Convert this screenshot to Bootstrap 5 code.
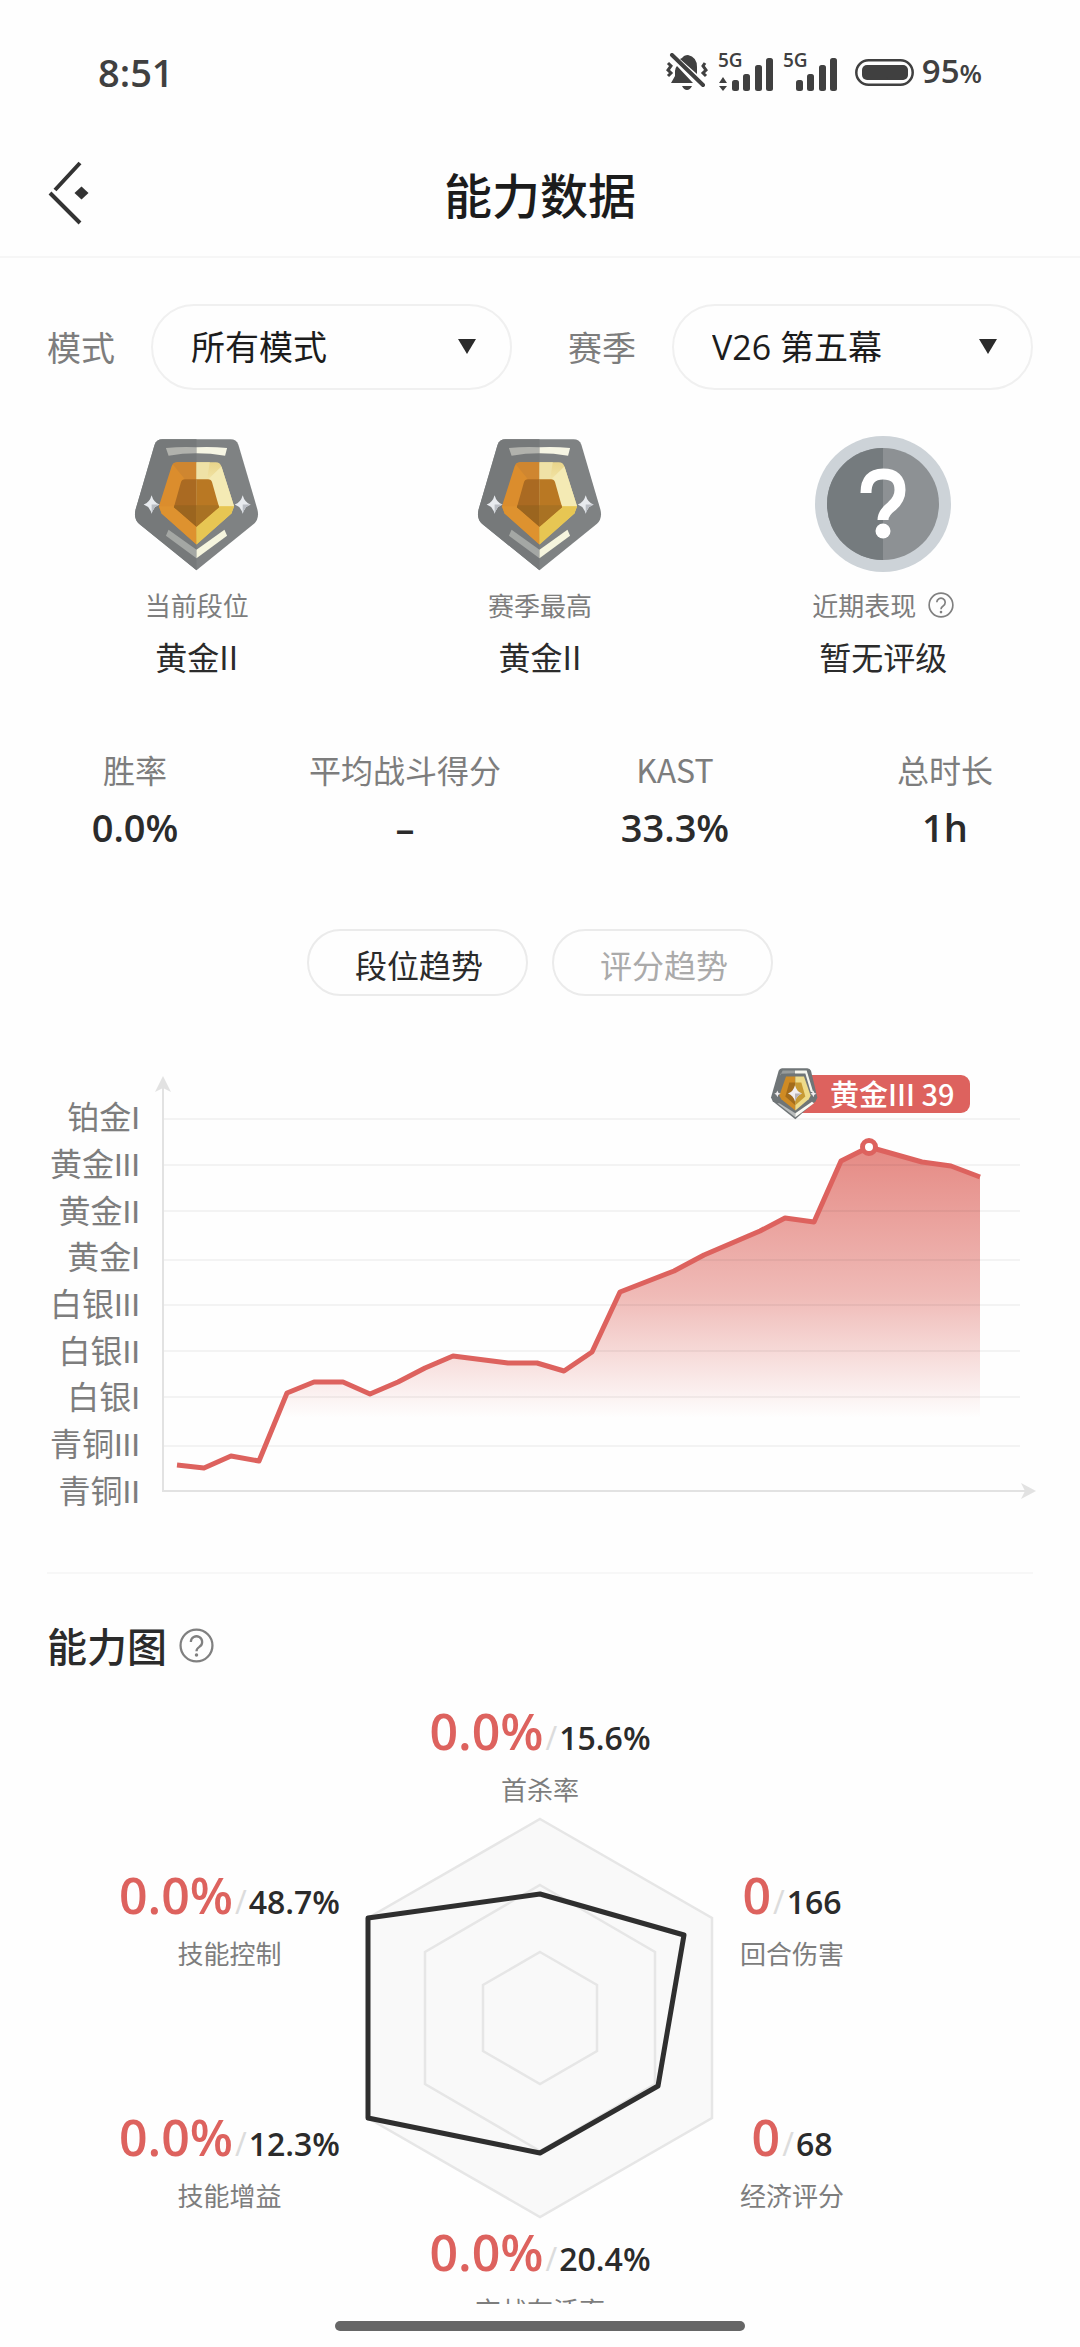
<!DOCTYPE html>
<html lang="zh-CN">
<head>
<meta charset="utf-8">
<meta name="viewport" content="width=device-width, initial-scale=1">
<title>能力数据</title>
<link href="https://cdn.jsdelivr.net/npm/bootstrap@5.3.0/dist/css/bootstrap.min.css" rel="stylesheet">
<script src="https://cdn.jsdelivr.net/npm/bootstrap@5.3.0/dist/js/bootstrap.bundle.min.js" defer></script>
<style>
  :root { --ink:#2b2b2b; --soft:#7d7d7d; --brand:#dd625e; }
  body { font-family:"Noto Sans CJK SC",sans-serif; color:var(--ink); background:#fefefe; font-size:32px; line-height:48px; }
  svg { display:block; flex:none; }
  .num { font-family:"Open Sans","Noto Sans",sans-serif; font-weight:600; }
  .soft { color:var(--soft); }
  .status-bar { height:144px; padding:0 98px; color:#404040; }
  .status-bar .clock { font-size:38px; }
  .status-bar .level { font-size:33px; }
  .status-bar .level span { font-size:26px; }
  .title-bar { height:114px; padding:0 47px 14px; border-bottom:2px solid #f6f6f6; }
  .title-bar h1 { font-size:48px; line-height:72px; font-weight:500; color:#1c1c1c; }
  .side-slot { width:48px; }
  .filters { padding:46px 47px 0; gap:56px; font-size:34px; }
  .filters .filter { flex:1 1 0; }
  .filters label { color:var(--soft); margin-right:36px; white-space:nowrap; }
  .picker { position:relative; flex:1; }
  .picker .form-select { height:86px; border:2px solid #f0f0f0; border-radius:43px; padding:0 60px 0 38px; font-size:34px; font-family:"Open Sans","Noto Sans CJK SC",sans-serif; color:#1c1c1c; background:none; appearance:none; }
  .picker::after { content:""; position:absolute; right:36px; top:35px; width:18px; height:15px; background:var(--ink); clip-path:polygon(0 0,100% 0,50% 100%); pointer-events:none; }
  .ranks { padding:45px 25px 0; }
  .emblem { height:138px; display:flex; align-items:center; justify-content:center; }
  .caption { font-size:26px; line-height:40px; color:var(--soft); }
  .ranks .caption { margin-top:12px; }
  .ranks .grade { margin-top:7px; }
  .bare { border:0; background:none; padding:0; color:#808080; }
  .help-gap { margin-left:12px; }
  .stats { padding-top:65px; }
  .stats .num { font-size:38px; line-height:52px; margin-top:8px; }
  .tabs { padding-top:76px; gap:24px; }
  .tabs .btn { width:221px; height:67px; padding:2px 0 0 3px; border:2px solid #ebebeb; border-radius:34px; font-size:32px; line-height:48px; color:#aaa; background:none; }
  .tabs .btn.active { color:var(--ink); border-color:#ebebeb; background:none; }
  .trend { padding:64px 40px 0 0; }
  .scale-list { width:150px; height:455px; padding:35px 10px 0 0; display:grid; grid-template-rows:repeat(9,1fr); align-items:center; text-align:right; color:var(--soft); font-family:Roboto,"Noto Sans CJK SC",sans-serif; line-height:46px; }
  .plot { position:relative; flex:1; }
  .plot svg.lines { width:100%; height:auto; }
  .peak { position:absolute; left:620px; top:7px; display:flex; align-items:center; color:#fff; font-size:29px; font-weight:500; }
  .peak span { height:38px; line-height:37px; margin-left:-24px; padding:0 16px 0 36px; border-radius:0 9px 9px 0; background:var(--brand); white-space:nowrap; }
  .peak svg { z-index:1; }
  .ability { margin:57px 47px 0; padding-top:46px; border-top:2px solid #f7f7f7; }
  .ability h2 { font-size:40px; line-height:50px; font-weight:500; }
  .ability .first-metric { margin-top:27px; }
  .radar { display:grid; grid-template-columns:1fr 346px 1fr; column-gap:27px; margin:8px 0 0; }
  .radar .flank { padding-top:44px; display:flex; flex-direction:column; gap:130px; }
  .metric { text-align:center; white-space:nowrap; }
  .metric .pair { line-height:68px; height:68px; font-size:32px; }
  .metric .pair b { font-size:50px; font-weight:600; color:var(--brand); }
  .metric .pair i { font-style:normal; font-weight:400; color:#dcdcdc; margin:0 2px; }
  .metric .caption { height:40px; margin-top:4px; }
  .home-area { height:43px; flex:none; }
  .home-area div { width:410px; height:10px; border-radius:5px; background:#666; margin-top:17px; }
</style>
</head>
<body class="d-flex flex-column vh-100 overflow-hidden">

<svg width="0" height="0" class="position-absolute" aria-hidden="true">
  <defs>
    <linearGradient id="gemRight" x1="0" y1="0" x2="0" y2="1"><stop offset="0" stop-color="#e9d58a"/><stop offset=".3" stop-color="#f5e9b0"/><stop offset=".6" stop-color="#efd873"/><stop offset="1" stop-color="#dcae3c"/></linearGradient>
    <linearGradient id="area" gradientUnits="userSpaceOnUse" x1="0" y1="87" x2="0" y2="358"><stop offset="0" stop-color="#e58a84"/><stop offset=".55" stop-color="#e58a84" stop-opacity=".58"/><stop offset="1" stop-color="#e58a84" stop-opacity="0"/></linearGradient>
    <symbol id="help" viewBox="0 0 34 34">
      <circle cx="17" cy="17" r="15.5" fill="none" stroke="currentColor" stroke-width="2.2"/>
      <path d="M11.5 13.5a5.5 5.5 0 1 1 8.3 4.8c-2 1.300-2.800 2-2.800 4.200" fill="none" stroke="currentColor" stroke-width="2.2"/>
      <circle cx="17" cy="26.300" r="1.700" fill="currentColor"/>
    </symbol>
    <symbol id="gold2" viewBox="42 38 376 400">
      <path fill="#7f8283" d="M128 42H332Q350 42 356 58L413 252Q420 280 403 296L230 436 57 296Q40 280 47 252L104 58Q110 42 128 42Z"/>
      <path fill="#76797a" d="M230 42V436L57 296Q40 280 47 252L104 58Q110 42 128 42Z"/>
      <path fill="#b1b2ad" d="M138 68Q184 64 230 66V84Q188 84 146 91Z"/>
      <path fill="#f6f5e3" d="M322 68Q276 64 230 66V84Q272 84 316 91Z"/>
      <path fill="#db8d2d" d="M230 111H172Q159 111 155 124L117 243 125 265 230 358Z"/>
      <path fill="#cf8630" d="M172 111H230V162H195L158 116Z"/>
      <path fill="#de922f" d="M117 243 162 243 230 305V358L125 265Z"/>
      <path fill="url(#gemRight)" d="M230 111H288Q301 111 305 124L343 243 335 265 230 358Z"/>
      <path fill="#efe2a6" d="M230 111H270L262 162H230Z"/>
      <path fill="#f4eab4" d="M305 124 343 243H298L265 162Z"/>
      <path fill="#e7c653" d="M230 305 298 243H343L335 265 230 358Z"/>
      <path fill="#aa6a22" d="M230 162H195Q186 162 183 172L162 246 230 305Z"/>
      <path fill="#b97823" d="M230 162H265Q274 162 277 172L298 246 230 305Z"/>
      <path fill="#9b651f" d="M230 240H164L162 246 230 305Z"/><path fill="#a97223" d="M230 240H296L298 246 230 305Z"/>
      <path fill="#a4a7a4" d="M146 314 230 374V400L138 332Z"/>
      <path fill="#f6f5de" d="M314 314 230 374V400L322 332Z"/>
      <path fill="#e8ebef" d="M95 210Q101 232 119 238 101 244 95 266 89 244 71 238 89 232 95 210ZM369 210Q375 232 393 238 375 244 369 266 363 244 345 238 363 232 369 210Z"/>
      <path fill="#b9bdc4" d="M95 238H119Q101 244 95 266ZM369 238H393Q375 244 369 266Z"/>
    </symbol>
    <symbol id="gold3" viewBox="28 34 144 158">
      <path fill="#6f7577" d="M64 37H140Q148 37 151 45L170 125 165 136 104 190 36 136 31 125 54 45Q57 37 64 37Z"/>
      <path fill="#989c9c" d="M103 44H66L58 60V54L103 52Z"/><path fill="#f5f5ee" d="M103 44H138L158 110 150 108 134 53H103Z"/>
      <path fill="#b9bcbc" d="M56 142 104 172V184L50 142Z"/><path fill="#fafaf5" d="M154 138 104 172V184L160 142Z"/>
      <path fill="#cf8b24" d="M104 62H76L56 120 62 130 104 164Z"/><path fill="#eedb8a" d="M104 62H130L150 120 144 130 104 164Z"/>
      <path fill="#a36c1c" d="M104 80H86L74 122 104 148Z"/><path fill="#c79a35" d="M104 80H122L134 122 104 148Z"/>
      <path fill="#f1eef0" d="M103 88Q108 107 124 113 108 119 103 137 98 119 82 113 98 107 103 88ZM50 104 53 111 60 114 53 117 50 124 47 117 41 114 47 111ZM158 104 161 111 167 114 161 117 158 124 155 117 149 114 155 111Z"/>
      <path fill="#b9b3b6" d="M103 113H124Q108 119 103 137Z"/>
    </symbol>
    <symbol id="bars" viewBox="0 0 42 33">
      <rect x="0" y="22" width="7" height="11" rx="2.500"/><rect x="11" y="16" width="7" height="17" rx="2.500"/><rect x="23" y="7" width="7" height="26" rx="2.500"/><rect x="34" y="0" width="7" height="33" rx="2.500"/>
    </symbol>
  </defs>
</svg>

<div class="status-bar d-flex align-items-center justify-content-between flex-shrink-0">
  <div class="num clock">8:51</div>
  <div class="d-flex align-items-center">
    <svg width="44" height="38" viewBox="0 0 44 38" fill="#404040" aria-label="静音">
      <path d="M6 30 10 23V18Q10 15 12 13L28 30ZM17 5Q19 2 23 2 32 4 32 14V21L15 6ZM17 33H27Q25 37 22 37 19 37 17 33Z"/>
      <path d="M7 2 38 32" stroke="#404040" stroke-width="4" stroke-linecap="round"/>
      <path d="M3 10 6 13 3 17 6 20 3 23M40 10 38 13 41 17 38 20 41 23" fill="none" stroke="#404040" stroke-width="3"/>
    </svg>
    <svg class="ms-2" width="57" height="56" viewBox="0 -8 57 56" fill="#404040"><text x="1" y="15" class="num" font-size="19">5G</text><path d="M2 31 6 25 10 31ZM2 34H10L6 39Z"/><use href="#bars" x="15" y="6" width="42" height="33"/></svg>
    <svg class="ms-2" width="57" height="56" viewBox="0 -8 57 56" fill="#404040"><text x="1" y="15" class="num" font-size="19">5G</text><use href="#bars" x="14" y="6" width="42" height="33"/></svg>
    <svg class="ms-3" width="59" height="27" viewBox="0 0 59 27"><rect x="1.300" y="1.300" width="56.400" height="24.400" rx="12.200" fill="none" stroke="#404040" stroke-width="2.500"/><rect x="7" y="6" width="46" height="15" rx="5" fill="#404040"/><rect x="30" y="6" width="23" height="15" rx="7.500" fill="#404040"/></svg>
    <div class="num level ms-2">95<span>%</span></div>
  </div>
</div>

<header class="title-bar d-flex align-items-center justify-content-between flex-shrink-0">
  <button type="button" class="bare side-slot" aria-label="返回">
    <svg width="44" height="64" viewBox="0 0 44 64"><path d="M33 2 8 29M3 32 33 62" fill="none" stroke="#333" stroke-width="4"/><path d="M34.500 25.500 41.500 32 34.500 38.500 27.500 32Z" fill="#333"/></svg>
  </button>
  <h1 class="m-0">能力数据</h1>
  <div class="side-slot"></div>
</header>

<main class="flex-grow-1 overflow-hidden">
  <form class="filters d-flex">
    <div class="filter d-flex align-items-center">
      <label for="mode">模式</label>
      <div class="picker"><select id="mode" class="form-select"><option>所有模式</option></select></div>
    </div>
    <div class="filter d-flex align-items-center">
      <label for="season">赛季</label>
      <div class="picker"><select id="season" class="form-select"><option>V26 第五幕</option></select></div>
    </div>
  </form>

  <section class="ranks row g-0 text-center">
    <div class="col-4">
      <div class="emblem"><svg width="125" height="133"><use href="#gold2"/></svg></div>
      <div class="caption">当前段位</div>
      <div class="grade">黄金II</div>
    </div>
    <div class="col-4">
      <div class="emblem"><svg width="125" height="133"><use href="#gold2"/></svg></div>
      <div class="caption">赛季最高</div>
      <div class="grade">黄金II</div>
    </div>
    <div class="col-4">
      <div class="emblem">
        <svg width="136" height="136" viewBox="0 0 136 136">
          <circle cx="68" cy="68" r="68" fill="#cdd3d8"/><circle cx="68" cy="68" r="56" fill="#8d9194"/><path d="M68 12A56 56 0 0 0 68 124Z" fill="#757b7e"/>
          <path d="M51 57Q51 38 68 38 85 38 85 54 85 63 77 70 68 77 68 84" fill="none" stroke="#fff" stroke-width="11"/><circle cx="68" cy="95" r="7.500" fill="#fff"/>
        </svg>
      </div>
      <div class="caption d-flex align-items-center justify-content-center">近期表现
        <button type="button" class="bare help-gap" aria-label="近期表现说明"><svg width="26" height="26"><use href="#help"/></svg></button>
      </div>
      <div class="grade">暂无评级</div>
    </div>
  </section>

  <section class="stats row g-0 text-center">
    <div class="col-3"><div class="soft">胜率</div><div class="num">0.0%</div></div>
    <div class="col-3"><div class="soft">平均战斗得分</div><div class="num">–</div></div>
    <div class="col-3"><div class="soft">KAST</div><div class="num">33.3%</div></div>
    <div class="col-3"><div class="soft">总时长</div><div class="num">1h</div></div>
  </section>

  <div class="tabs d-flex justify-content-center">
    <button type="button" class="btn active">段位趋势</button>
    <button type="button" class="btn">评分趋势</button>
  </div>

  <section class="trend d-flex">
    <ul class="scale-list list-unstyled m-0">
      <li>铂金I</li><li>黄金III</li><li>黄金II</li><li>黄金I</li><li>白银III</li><li>白银II</li><li>白银I</li><li>青铜III</li><li>青铜II</li>
    </ul>
    <div class="plot">
      <svg class="lines" viewBox="0 0 890 448" role="img" aria-label="段位趋势图">
        <path d="M27 405 54 408 81 396 109 401 137 333 164 322H193L220 334 248 322 275 308 303 296 358 303H387L414 311 442 292 470 232 524 211 554 195 610 171 635 158 664 162 691 101 719 87 772 102 801 106 830 117V431H27Z" fill="url(#area)"/>
        <path d="M14 59H870M14 105H870M14 151H870M14 200H870M14 245H870M14 291H870M14 337H870M14 386H870" stroke="#000" stroke-opacity=".045" stroke-width="2"/>
        <path d="M13 25V431H876" fill="none" stroke="#e2e2e2" stroke-width="2"/>
        <path d="M13 16 21 32 13 28 5 32ZM886 431 871 423 875 431 871 439Z" fill="#e2e2e2"/>
        <path d="M27 405 54 408 81 396 109 401 137 333 164 322H193L220 334 248 322 275 308 303 296 358 303H387L414 311 442 292 470 232 524 211 554 195 610 171 635 158 664 162 691 101 719 87 772 102 801 106 830 117" fill="none" stroke="#dd625e" stroke-width="5" stroke-linejoin="round"/>
        <circle cx="719" cy="87" r="6.500" fill="#fff" stroke="#dd625e" stroke-width="5"/>
      </svg>
      <div class="peak"><svg width="48" height="53"><use href="#gold3"/></svg><span>黄金III 39</span></div>
    </div>
  </section>

  <section class="ability">
    <div class="d-flex align-items-center">
      <h2 class="m-0">能力图</h2>
      <button type="button" class="bare help-gap" aria-label="能力图说明"><svg width="35" height="35"><use href="#help"/></svg></button>
    </div>
    <div class="metric first-metric">
      <div class="num pair"><b>0.0%</b><i>/</i>15.6%</div>
      <div class="caption">首杀率</div>
    </div>
    <div class="radar">
      <div class="flank align-items-end">
        <div class="metric"><div class="num pair"><b>0.0%</b><i>/</i>48.7%</div><div class="caption">技能控制</div></div>
        <div class="metric"><div class="num pair"><b>0.0%</b><i>/</i>12.3%</div><div class="caption">技能增益</div></div>
      </div>
      <svg class="w-100" viewBox="0 0 346 401" overflow="visible" role="img" aria-label="能力雷达图">
        <g fill="#f9f9f9" stroke="#e6e6e6" stroke-width="2.500">
          <path d="M173 2 345 101V301L173 400 1 301V101Z"/>
          <path d="M173 68 288 135V267L173 334 58 267V135Z"/>
          <path d="M173 135 230 168V234L173 267 116 234V168Z"/>
        </g>
        <path d="M173 77 317 118 291 269 173 336 1 301V101Z" fill="none" stroke="#2f2f2f" stroke-width="5" stroke-linejoin="round"/>
      </svg>
      <div class="flank align-items-start">
        <div class="metric"><div class="num pair"><b>0</b><i>/</i>166</div><div class="caption">回合伤害</div></div>
        <div class="metric"><div class="num pair"><b>0</b><i>/</i>68</div><div class="caption">经济评分</div></div>
      </div>
    </div>
    <div class="metric">
      <div class="num pair"><b>0.0%</b><i>/</i>20.4%</div>
      <div class="caption">交战存活率</div>
    </div>
  </section>
</main>

<footer class="home-area d-flex justify-content-center"><div></div></footer>
</body>
</html>
